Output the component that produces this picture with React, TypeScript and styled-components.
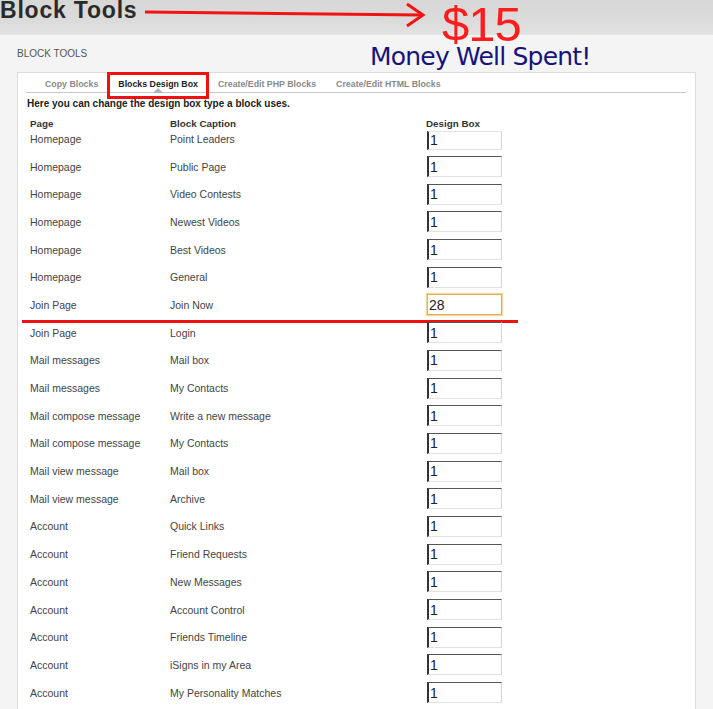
import React from "react";
import styled, { createGlobalStyle, css } from "styled-components";

const GlobalStyle = createGlobalStyle`
  html, body { margin: 0; padding: 0; }
  body {
    background: #f4f4f4;
    font-family: "Liberation Sans", Arial, sans-serif;
    color: #444;
  }
`;

const Page = styled.div`
  position: relative;
  width: 713px;
  min-height: 709px;
  overflow: hidden;
`;

const TopBand = styled.header`
  height: 35px;
  background: linear-gradient(#d7d7d7, #dcdcdc 70%, #e3e3e3);
  display: flex;
  align-items: flex-start;
`;

const Title = styled.h1`
  margin: -1px 0 0 0;
  font-size: 23px;
  line-height: 22px;
  font-weight: bold;
  letter-spacing: 0.8px;
  color: #2a2a2a;
`;

const ArrowSvg = styled.svg`
  position: absolute;
  left: 140px;
  top: 0;
`;

const Price = styled.div`
  position: absolute;
  left: 442px;
  top: 0;
  font-family: "Liberation Sans", Arial, sans-serif;
  font-size: 49px;
  line-height: 49px;
  letter-spacing: -1px;
  color: #ff1c1c;
`;

const Slogan = styled.div`
  position: absolute;
  left: 370px;
  top: 44px;
  font-family: "DejaVu Sans", sans-serif;
  font-size: 25px;
  line-height: 25px;
  letter-spacing: -0.8px;
  color: #17137a;
`;

const Section = styled.main`
  padding: 0 17px;
`;

const SectionLabel = styled.div`
  margin-top: 13px;
  font-size: 10px;
  line-height: 12px;
  color: #555;
  text-transform: uppercase;
`;

const Panel = styled.section`
  margin-top: 12px;
  background: #fff;
  border: 1px solid #dcdcdc;
  padding: 0 9px 8px 8px;
`;

const TabBar = styled.nav`
  display: flex;
  padding: 5px 0 2px 9px;
  border-bottom: 1px solid #c4c8cc;
`;

const Tab = styled.div<{ $active?: boolean }>`
  position: relative;
  padding: 0 10px;
  font-size: 8.8px;
  line-height: 12px;
  font-weight: bold;
  color: ${(p) => (p.$active ? "#222" : "#8a8a8a")};
  ${(p) =>
    p.$active &&
    css`
      &::before {
        content: "";
        position: absolute;
        left: 50%;
        bottom: -3px;
        margin-left: -5px;
        border-left: 5px solid transparent;
        border-right: 5px solid transparent;
        border-bottom: 5px solid #aab2ba;
      }
      &::after {
        content: "";
        position: absolute;
        left: -1px;
        right: -1px;
        top: -6px;
        bottom: -9px;
        border: 3px solid #f01010;
      }
    `}
`;

const Intro = styled.p`
  margin: 5px 0 0 1px;
  font-size: 10px;
  line-height: 12px;
  font-weight: bold;
  color: #222;
`;

const Table = styled.div`
  padding-left: 4px;
`;

const gridCols = css`
  display: grid;
  grid-template-columns: 140px 256px 77px;
  align-items: center;
`;

const HeadRow = styled.div`
  ${gridCols};
  margin-top: 7px;
  height: 12px;
  font-size: 9.8px;
  font-weight: bold;
  color: #333;
`;

const Rows = styled.div`
  margin-top: -4px;
`;

const BoxInput = styled.input<{ $focused?: boolean }>`
  box-sizing: border-box;
  width: 75px;
  height: 21px;
  margin-left: 1px;
  padding: 0 0 0 1px;
  font-family: "Liberation Sans", Arial, sans-serif;
  font-size: 14px;
  color: #222;
  background: #fff;
  outline: none;
  border-style: solid;
  border-width: 1px 1px 1px 2px;
  border-color: #555 #d6d6d6 #e2e2e2 #333;
  ${(p) =>
    p.$focused &&
    css`
      border-width: 1px;
      border-color: #e2b050;
      box-shadow: 0 0 1px 1px #f3d49a;
    `}
`;

const Row = styled.div<{ $marked?: boolean }>`
  ${gridCols};
  position: relative;
  height: 27.7px;
  font-size: 10.5px;
  color: #444;
  &:first-child ${BoxInput} {
    height: 19px;
    margin-top: 3px;
    border-top-color: #e4e4e4;
  }
  ${(p) =>
    p.$marked &&
    css`
      &::after {
        content: "";
        position: absolute;
        left: -8px;
        width: 496px;
        bottom: -4px;
        height: 3px;
        background: #f01010;
      }
    `}
`;

const Cell = styled.span`
  white-space: nowrap;
`;

type Block = { page: string; caption: string; box: string; focused?: boolean };

const blocks: Block[] = [
  { page: "Homepage", caption: "Point Leaders", box: "1" },
  { page: "Homepage", caption: "Public Page", box: "1" },
  { page: "Homepage", caption: "Video Contests", box: "1" },
  { page: "Homepage", caption: "Newest Videos", box: "1" },
  { page: "Homepage", caption: "Best Videos", box: "1" },
  { page: "Homepage", caption: "General", box: "1" },
  { page: "Join Page", caption: "Join Now", box: "28", focused: true },
  { page: "Join Page", caption: "Login", box: "1" },
  { page: "Mail messages", caption: "Mail box", box: "1" },
  { page: "Mail messages", caption: "My Contacts", box: "1" },
  { page: "Mail compose message", caption: "Write a new message", box: "1" },
  { page: "Mail compose message", caption: "My Contacts", box: "1" },
  { page: "Mail view message", caption: "Mail box", box: "1" },
  { page: "Mail view message", caption: "Archive", box: "1" },
  { page: "Account", caption: "Quick Links", box: "1" },
  { page: "Account", caption: "Friend Requests", box: "1" },
  { page: "Account", caption: "New Messages", box: "1" },
  { page: "Account", caption: "Account Control", box: "1" },
  { page: "Account", caption: "Friends Timeline", box: "1" },
  { page: "Account", caption: "iSigns in my Area", box: "1" },
  { page: "Account", caption: "My Personality Matches", box: "1" },
];

const tabs = ["Copy Blocks", "Blocks Design Box", "Create/Edit PHP Blocks", "Create/Edit HTML Blocks"];

export default function App() {
  return (
    <Page>
      <GlobalStyle />
      <TopBand>
        <Title>Block Tools</Title>
      </TopBand>
      <ArrowSvg width="290" height="34" viewBox="0 0 290 34">
        <path d="M5 12 L282 15" stroke="#f01414" strokeWidth="3" fill="none" />
        <path d="M267 4 L283 15 L267 26" stroke="#f01414" strokeWidth="3" fill="none" />
      </ArrowSvg>
      <Price>$15</Price>
      <Slogan>Money Well Spent!</Slogan>
      <Section>
        <SectionLabel>Block Tools</SectionLabel>
        <Panel>
          <TabBar>
            {tabs.map((t) => (
              <Tab key={t} $active={t === "Blocks Design Box"}>
                {t}
              </Tab>
            ))}
          </TabBar>
          <Intro>Here you can change the design box type a block uses.</Intro>
          <Table>
            <HeadRow>
              <Cell>Page</Cell>
              <Cell>Block Caption</Cell>
              <Cell>Design Box</Cell>
            </HeadRow>
            <Rows>
              {blocks.map((b, i) => (
                <Row key={i} $marked={b.focused}>
                  <Cell>{b.page}</Cell>
                  <Cell>{b.caption}</Cell>
                  <BoxInput defaultValue={b.box} $focused={b.focused} />
                </Row>
              ))}
            </Rows>
          </Table>
        </Panel>
      </Section>
    </Page>
  );
}
